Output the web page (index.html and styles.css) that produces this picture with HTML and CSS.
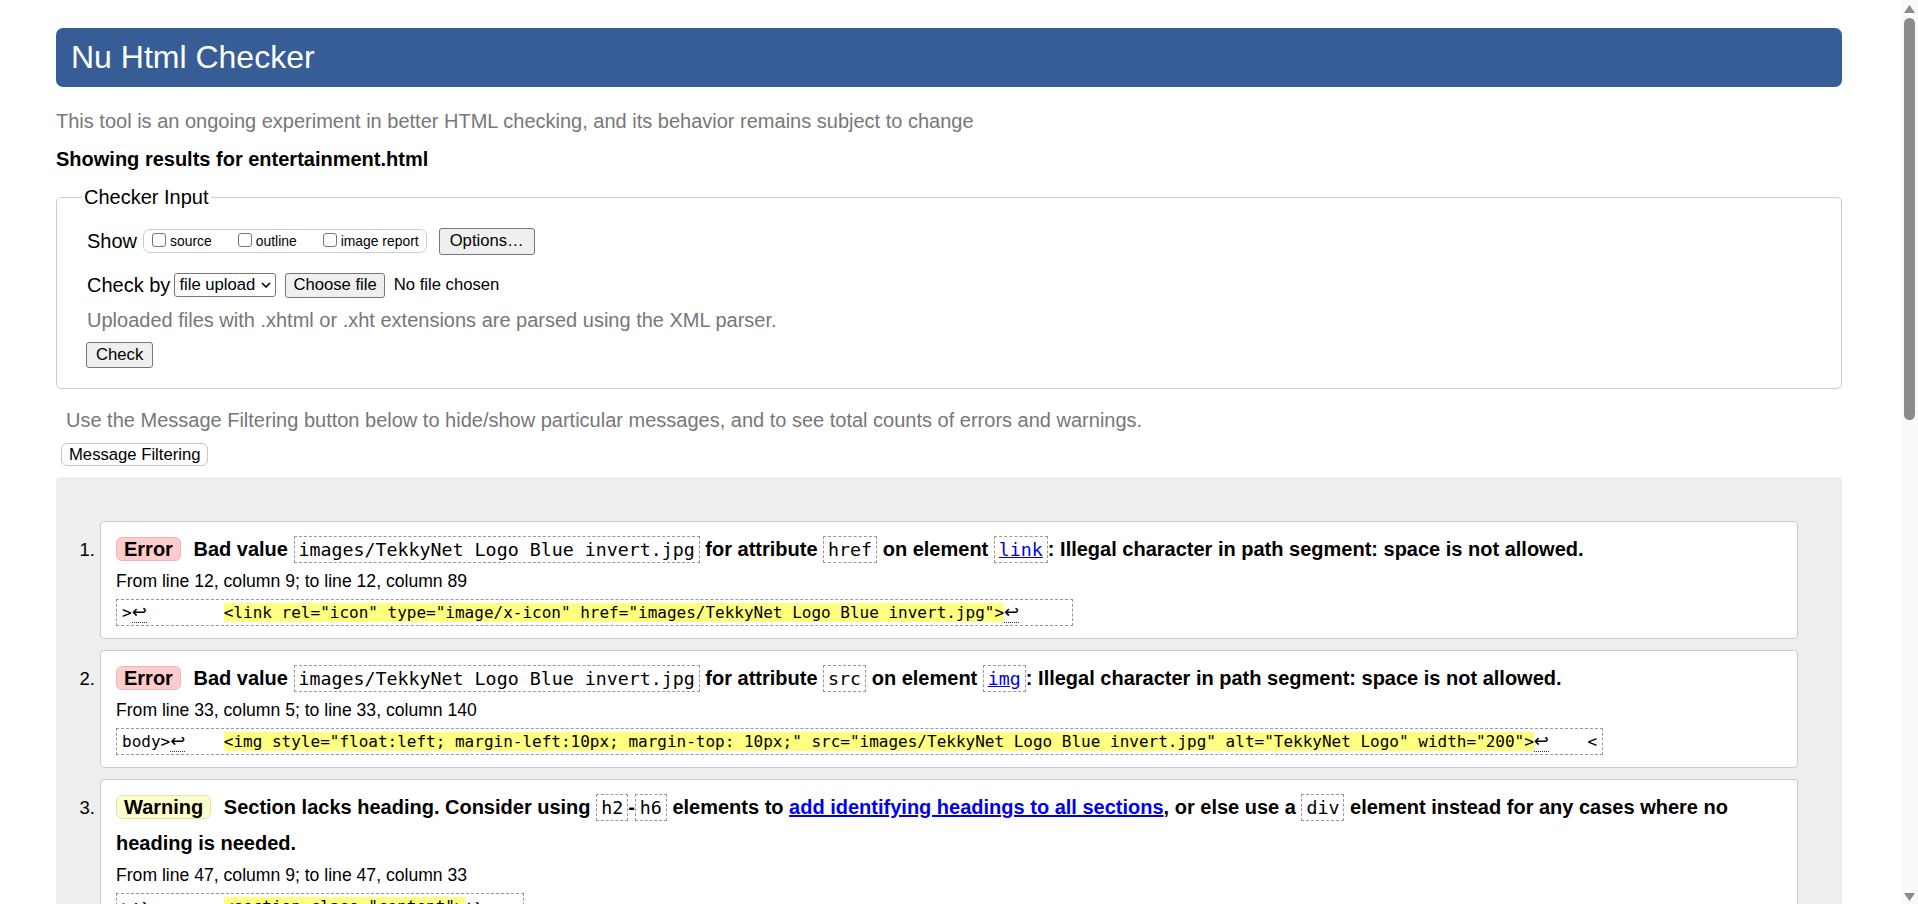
FILE: index.html
```html
<!DOCTYPE html>
<html lang="en">
<head>
<meta charset="utf-8">
<title>Showing results for entertainment.html - Nu Html Checker</title>
<link rel="stylesheet" href="styles.css">
</head>
<body>
<div class="viewport">
  <main class="page">
    <h1 class="banner">Nu Html Checker</h1>
    <p class="intro">This tool is an ongoing experiment in better HTML checking, and its behavior remains subject to change</p>
    <p class="showing">Showing results for entertainment.html</p>

    <fieldset class="checker-input">
      <legend>Checker Input</legend>
      <div class="row">
        <span>Show</span>
        <span class="opts">
          <span class="opt"><span class="cb"></span>source</span>
          <span class="opt"><span class="cb"></span>outline</span>
          <span class="opt"><span class="cb"></span>image report</span>
        </span>
        <span class="btn btn-options">Options…</span>
      </div>
      <div class="row">
        <span>Check by</span>
        <span class="select">file upload<svg class="chev" viewBox="0 0 10 6" width="10" height="6"><path d="M1 1l4 4 4-4" fill="none" stroke="#000" stroke-width="1.6"/></svg></span>
        <span class="btn btn-file">Choose file</span>
        <span class="nofile">No file chosen</span>
      </div>
      <p class="note">Uploaded files with .xhtml or .xht extensions are parsed using the XML parser.</p>
      <span class="btn btn-check">Check</span>
    </fieldset>

    <p class="filter-note">Use the Message Filtering button below to hide/show particular messages, and to see total counts of errors and warnings.</p>
    <span class="filter-btn">Message Filtering</span>

    <section class="results">
      <ol class="messages">
        <li class="msg">
          <p class="msg-title"><span class="badge err">Error</span> Bad value <code>images/TekkyNet Logo Blue invert.jpg</code> for attribute <code>href</code> on element <code><a href="#">link</a></code>: Illegal character in path segment: space is not allowed.</p>
          <p class="loc">From line 12, column 9; to line 12, column 89</p>
          <div class="extract">&gt;<span class="lf">↩</span>&nbsp;&nbsp;&nbsp;&nbsp;&nbsp;&nbsp;&nbsp;&nbsp;<mark>&lt;link rel="icon" type="image/x-icon" href="images/TekkyNet Logo Blue invert.jpg"&gt;</mark><span class="lf">↩</span>&nbsp;&nbsp;&nbsp;&nbsp;&nbsp;</div>
        </li>
        <li class="msg">
          <p class="msg-title"><span class="badge err">Error</span> Bad value <code>images/TekkyNet Logo Blue invert.jpg</code> for attribute <code>src</code> on element <code><a href="#">img</a></code>: Illegal character in path segment: space is not allowed.</p>
          <p class="loc">From line 33, column 5; to line 33, column 140</p>
          <div class="extract">body&gt;<span class="lf">↩</span>&nbsp;&nbsp;&nbsp;&nbsp;<mark>&lt;img style="float:left; margin-left:10px; margin-top: 10px;" src="images/TekkyNet Logo Blue invert.jpg" alt="TekkyNet Logo" width="200"&gt;</mark><span class="lf">↩</span>&nbsp;&nbsp;&nbsp;&nbsp;&lt;</div>
        </li>
        <li class="msg">
          <p class="msg-title"><span class="badge warn">Warning</span> Section lacks heading. Consider using <code>h2</code>-<code>h6</code> elements to <a href="#">add identifying headings to all sections</a>, or else use a <code>div</code> element instead for any cases where no heading is needed.</p>
          <p class="loc">From line 47, column 9; to line 47, column 33</p>
          <div class="extract">&gt;<span class="lf">↩</span>&nbsp;&nbsp;&nbsp;&nbsp;&nbsp;&nbsp;&nbsp;&nbsp;<mark>&lt;section class="content"&gt;</mark><span class="lf">↩</span>&nbsp;&nbsp;&nbsp;&nbsp;</div>
        </li>
      </ol>
    </section>
  </main>
  <div class="scrollbar" aria-hidden="true">
    <svg class="arrow" viewBox="0 0 11 8" width="11" height="8"><path d="M5.5 0L11 8H0z" fill="#8b8b8b"/></svg>
    <div class="thumb"></div>
    <div class="spacer"></div>
    <svg class="arrow" viewBox="0 0 11 8" width="11" height="8"><path d="M0 0h11L5.5 8z" fill="#8b8b8b"/></svg>
  </div>
</div>
</body>
</html>
```

FILE: styles.css
```css
html, body {
  margin: 0;
  padding: 0;
  height: 100%;
  overflow: hidden;
  background: #fff;
}

body {
  font-family: "Liberation Sans", Arial, sans-serif;
  font-size: 20px;
  color: #000;
}

.viewport {
  display: flex;
  height: 904px;
}

.page {
  flex: 1;
  min-width: 0;
  padding: 28px 59px 0 56px;
  overflow: hidden;
}

/* ---------- header ---------- */
.banner {
  margin: 0;
  height: 59px;
  line-height: 59px;
  padding: 0 15px;
  background: #365d95;
  color: #fff;
  font-size: 32px;
  font-weight: normal;
  border-radius: 7px;
}

.intro {
  margin: 22px 0 0;
  line-height: 24px;
  color: #777;
}

.showing {
  margin: 14px 0 0;
  line-height: 24px;
  font-weight: bold;
}

/* ---------- checker input ---------- */
.checker-input {
  margin: 14px 0 0;
  padding: 18px 30px 20px;
  border: 1px solid #ccc;
  border-radius: 5px;
  min-width: 0;
}

.checker-input legend {
  padding: 0 2px;
  margin-left: -5px;
  line-height: 24px;
}

.row {
  display: flex;
  align-items: center;
  height: 28px;
}

.row + .row {
  margin-top: 16px;
}

.opts {
  display: inline-flex;
  align-items: center;
  box-sizing: border-box;
  height: 24px;
  margin-left: 6px;
  padding: 0 7px 0 8px;
  border: 1px solid #ccc;
  border-radius: 7px;
  font-size: 13.9px;
}

.opt {
  display: inline-flex;
  align-items: center;
}

.opt + .opt {
  margin-left: 26px;
}

.cb {
  width: 14px;
  height: 14px;
  box-sizing: border-box;
  margin: -3px 4px 0 0;
  border: 1px solid #767676;
  border-radius: 3px;
  background: #fff;
}

.btn {
  display: inline-flex;
  align-items: center;
  box-sizing: border-box;
  padding: 0 9px;
  border: 1px solid #767676;
  border-radius: 3px;
  background: #efefef;
  font-size: 16.67px;
  color: #000;
}

.btn-options {
  height: 27px;
  margin-left: 12px;
  padding: 0 10px;
}

.select {
  display: inline-flex;
  align-items: center;
  justify-content: space-between;
  box-sizing: border-box;
  width: 102px;
  height: 24px;
  margin-left: 4px;
  padding: 0 4px 0 4px;
  border: 1px solid #767676;
  border-radius: 3px;
  background: #fff;
  font-size: 16.67px;
}

.chev {
  flex: none;
}

.btn-file {
  height: 25px;
  margin-left: 9px;
  padding: 0 7px;
}

.nofile {
  margin-left: 9px;
  font-size: 16.67px;
}

.note {
  margin: 9px 0 0;
  line-height: 24px;
  color: #777;
}

.btn-check {
  display: flex;
  width: fit-content;
  height: 26px;
  margin: 10px 0 0 -1px;
}

/* ---------- filter ---------- */
.filter-note {
  margin: 19px 0 0;
  padding-left: 10px;
  line-height: 24px;
  color: #777;
}

.filter-btn {
  display: flex;
  align-items: center;
  box-sizing: border-box;
  width: fit-content;
  height: 23px;
  margin: 11px 0 0 5px;
  padding: 0 7px;
  border: 1px solid #c4c4c4;
  border-radius: 6px;
  background: #fff;
  font-size: 16.67px;
}

/* ---------- results ---------- */
.results {
  margin-top: 11px;
  padding: 44px;
  background: #eee;
  border-radius: 4px;
}

.messages {
  margin: 0;
  padding: 0;
  list-style: decimal outside;
}

.msg {
  padding: 9px 15px 12px;
  background: #fff;
  border: 1px solid #ccc;
  border-radius: 4px;
}

.msg + .msg {
  margin-top: 11px;
}

.msg::marker {
  font-size: 18.5px;
}

.msg-title {
  margin: 0;
  line-height: 36px;
  font-weight: bold;
}

.badge {
  display: inline-block;
  padding: 0 7px;
  margin-right: 7px;
  line-height: 22px;
  border: 1px solid;
  border-radius: 6px;
}

.badge.err {
  background: #fcc;
  border-color: #f0b4b4;
}

.badge.warn {
  background: #ffc;
  border-color: #e2e2a8;
}

.msg code {
  display: inline-block;
  padding: 2px 4px;
  line-height: 21px;
  border: 1px dashed #999;
  font-family: "DejaVu Sans Mono", "Liberation Mono", monospace;
  font-size: 18.3px;
  font-weight: normal;
}

.msg a {
  color: #00e;
  text-decoration: underline;
}

.loc {
  margin: 4px 0 0;
  font-size: 17.6px;
  line-height: 20px;
}

.extract {
  display: table;
  margin-top: 8px;
  padding: 2px 5px;
  border: 1px dashed #999;
  font-family: "DejaVu Sans Mono", "Liberation Mono", monospace;
  font-size: 16px;
  line-height: 21px;
  white-space: pre;
}

.extract mark {
  background: #ffff80;
  color: inherit;
}

.lf {
  font-family: "DejaVu Sans", sans-serif;
  font-size: 18px;
  line-height: 16px;
  border-bottom: 1px dotted #333;
}

/* ---------- scrollbar ---------- */
.scrollbar {
  flex: none;
  width: 17px;
  box-sizing: border-box;
  padding: 5px 0 3px;
  display: flex;
  flex-direction: column;
  align-items: center;
  background: #f9f9f9;
}

.thumb {
  width: 11px;
  height: 402px;
  margin-top: 5px;
  border-radius: 6px;
  background: #8b8b8b;
}

.spacer {
  flex: 1;
}
```
